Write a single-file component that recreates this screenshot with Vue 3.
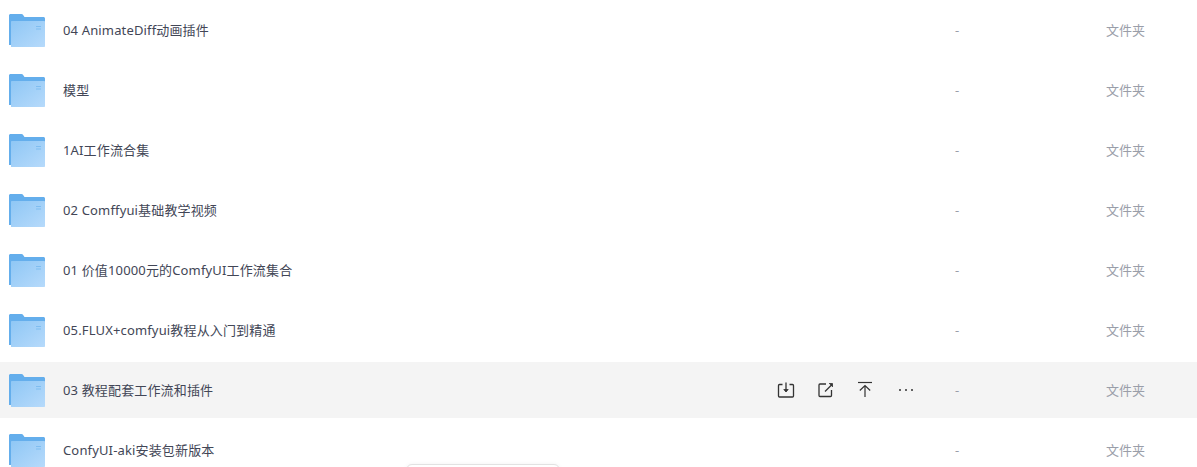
<script setup>
const rows = [
  '04 AnimateDiff动画插件',
  '模型',
  '1AI工作流合集',
  '02 Comffyui基础教学视频',
  '01 价值10000元的ComfyUI工作流集合',
  '05.FLUX+comfyui教程从入门到精通',
  '03 教程配套工作流和插件',
  'ConfyUI-aki安装包新版本',
]
const hoverIndex = 6
</script>

<template>
  <div class="page">
    <div
      v-for="(name, i) in rows"
      :key="name"
      class="row"
      :class="{ hover: i === hoverIndex }"
    >
      <svg class="folder" width="36" height="33" viewBox="0 0 36 33">
        <defs>
          <linearGradient :id="'front' + i" x1="0" y1="0" x2="1" y2="1">
            <stop offset="0" stop-color="#8fc7f5" />
            <stop offset="1" stop-color="#b6dafb" />
          </linearGradient>
        </defs>
        <path d="M0 1.500C0 .7.7 0 1.500 0h11c.5 0 1 .2 1.300.6L15.500 3h19c.8 0 1.500.7 1.500 1.500V31H0z" fill="#64aeec" />
        <path d="M2 8C2 7.400 2.400 7 3 7h32c.6 0 1 .4 1 1v24c0 .6-.4 1-1 1H2z" :fill="`url(#front${i})`" />
        <path d="M27 12h5v1h-5zM27 14.500h5v1h-5z" fill="#7fbdf0" />
      </svg>
      <span class="name">{{ name }}</span>
      <div v-if="i === hoverIndex" class="actions">
        <svg width="18" height="18" viewBox="0 0 18 18" fill="none" stroke="#333" stroke-width="1.300">
          <path d="M5.500 3.500H2.500a1 1 0 0 0-1 1V15a1 1 0 0 0 1 1h13a1 1 0 0 0 1-1V4.500a1 1 0 0 0-1-1h-3" />
          <path d="M9 1.500v9" />
          <path d="M6.800 8.500 9 11l2.200-2.500z" fill="#333" stroke-width=".8" />
        </svg>
        <svg width="16" height="16" viewBox="0 0 16 16" fill="none" stroke="#333" stroke-width="1.300">
          <path d="M8 2H2a1 1 0 0 0-1 1v10.500a1 1 0 0 0 1 1h10.500a1 1 0 0 0 1-1V8" />
          <path d="M7 9.500 14 2.500" />
          <path d="M11 1.500h3.500V5" fill="#333" stroke-width=".8" />
        </svg>
        <svg width="16" height="18" viewBox="0 0 16 18" fill="none" stroke="#333" stroke-width="1.200">
          <path d="M1 1.500h14" />
          <path d="M8 16V5M2.800 9.500 8 4.500l5.200 5" />
        </svg>
        <svg class="dots" width="16" height="4" viewBox="0 0 16 4" fill="#333">
          <circle cx="2" cy="2" r="1" />
          <circle cx="8" cy="2" r="1" />
          <circle cx="14" cy="2" r="1" />
        </svg>
      </div>
      <span class="size">-</span>
      <span class="type">文件夹</span>
    </div>
    <div class="pill"></div>
  </div>
</template>

<style>
html, body { overflow: hidden; background: #fff; }
</style>

<style scoped>
.page {
  position: relative;
  height: 467px;
  overflow: hidden;
  font-family: "Noto Sans", "Noto Sans CJK SC", sans-serif;
  font-size: 13px;
  background: #fff;
}
.row {
  display: flex;
  align-items: center;
  height: 56px;
  margin: 2px 0 4px;
  padding-left: 9px;
}
.row.hover { background: #f4f4f4; }
.folder { flex: none; margin-top: 1px; }
.name {
  margin-left: 18px;
  padding-bottom: 2px;
  letter-spacing: 0.15px;
  color: #424656;
}
.actions {
  position: absolute;
  left: 777px;
  display: flex;
  align-items: center;
  gap: 23px;
}
.dots { margin-left: 2px; }
.size {
  position: absolute;
  left: 955px;
  color: #9a9ea9;
}
.type {
  position: absolute;
  left: 1106px;
  padding-bottom: 2px;
  color: #9a9ea9;
}
.pill {
  position: absolute;
  left: 406px;
  top: 464px;
  width: 152px;
  height: 20px;
  border: 1px solid #e2e2e2;
  border-radius: 6px;
  background: #fff;
  box-shadow: 0 0 4px rgba(0, 0, 0, 0.05);
}
</style>
